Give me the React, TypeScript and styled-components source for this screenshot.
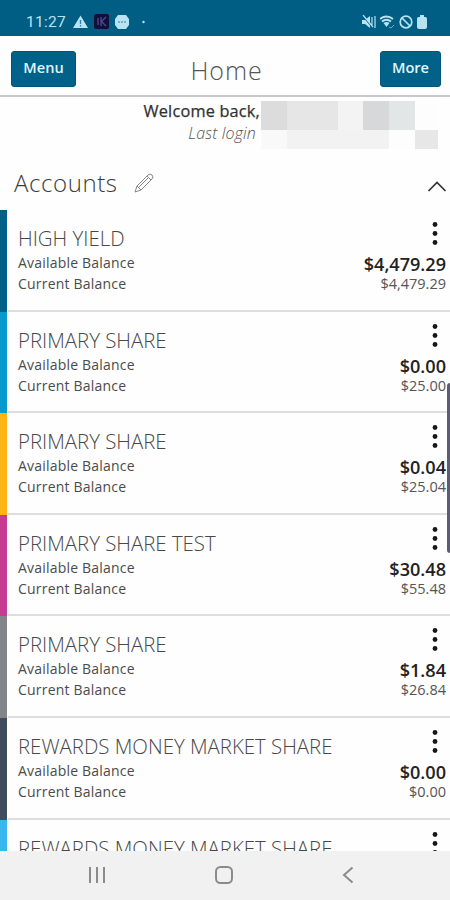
import React from "react";
import styled, { createGlobalStyle } from "styled-components";

const GlobalStyle = createGlobalStyle`
  * { box-sizing: border-box; }
  body { margin: 0; background: #fefefe; font-family: "Open Sans", "Noto Sans", sans-serif; }
`;

const Screen = styled.div`
  position: relative;
  display: flex;
  flex-direction: column;
  width: 450px;
  height: 900px;
  overflow: hidden;
  background: #fefefe;
`;

const StatusBar = styled.header`
  display: flex;
  justify-content: space-between;
  flex: none;
  height: 36px;
  padding: 7px 23px 0 26px;
  background: #005e85;
  color: #b9e3f3;
`;

const StatusGroup = styled.div<{ $gap: number }>`
  display: flex;
  align-items: center;
  gap: ${(p) => p.$gap}px;
  height: 29px;
`;

const Clock = styled.span`
  width: 41px;
  font: 400 15.5px/28px Roboto, sans-serif;
  letter-spacing: 0.25px;
  white-space: nowrap;
`;

const Toolbar = styled.div`
  display: flex;
  justify-content: space-between;
  flex: none;
  height: 61px;
  padding: 15px 9px 0 11px;
  border-bottom: 2px solid #c9c9c9;
`;

const ToolbarButton = styled.button<{ $width: number }>`
  width: ${(p) => p.$width}px;
  height: 36px;
  padding: 0 0 3px;
  border: 1px solid #00577b;
  border-radius: 3px;
  background: #006189;
  color: #e2f6fc;
  font: 600 14.6px/31px "Open Sans", sans-serif;
`;

const PageTitle = styled.h1`
  margin: 3px 3px 0 0;
  color: #555;
  font-size: 25px;
  font-weight: 300;
  line-height: 33px;
  letter-spacing: 0.9px;
`;

const Welcome = styled.section`
  display: flex;
  flex: none;
  height: 66px;
  padding-top: 4px;
`;

const Greeting = styled.div`
  width: 261px;
  padding-right: 1px;
  text-align: right;
  white-space: nowrap;
`;

const WelcomeText = styled.div`
  color: #303030;
  font-size: 16.3px;
  font-weight: 400;
  line-height: 21px;
  letter-spacing: 0.2px;
  -webkit-text-stroke: 0.25px #303030;
`;

const LastLogin = styled.div`
  padding-right: 4px;
  color: #555;
  font-size: 16px;
  font-style: italic;
  font-weight: 300;
  line-height: 22px;
  letter-spacing: 0.15px;
`;

const Redaction = styled.div`
  display: grid;
  grid-template-columns: repeat(6, 25.6px) 23px;
  grid-template-rows: 29px 19px;
`;

const RedactionCell = styled.span<{ $shade: string }>`
  background: ${(p) => p.$shade};
`;

const SectionHeader = styled.div`
  display: flex;
  align-items: center;
  flex: none;
  height: 47px;
  padding: 0 3px 8px 14px;
`;

const SectionTitle = styled.h2`
  margin: 0 16px 0 0;
  color: #3c3c3c;
  font-size: 24px;
  font-weight: 300;
  line-height: 32px;
  letter-spacing: 0.6px;
`;

const Chevron = styled.svg`
  margin: 7px 0 0 auto;
`;

const AccountList = styled.main`
  flex: 1;
  min-height: 0;
  overflow: hidden;
`;

const Account = styled.article`
  display: flex;
  height: 101.6px;
`;

const Stripe = styled.div<{ $color: string }>`
  flex: none;
  width: 7px;
  background: ${(p) => p.$color};
`;

const AccountBody = styled.div`
  display: flex;
  justify-content: space-between;
  flex: 1;
  margin-left: 1px;
  padding: 14px 4px 0 10px;
  border-bottom: 2px solid #dedede;
`;

const Details = styled.div`
  white-space: nowrap;
`;

const AccountName = styled.h3`
  margin: 0;
  color: #484848;
  font-size: 20.4px;
  font-weight: 300;
  line-height: 28px;
`;

const BalanceLabel = styled.div`
  color: #4b4b4b;
  font-size: 14px;
  line-height: 21px;
  letter-spacing: 0.2px;
`;

const Amounts = styled.div`
  display: flex;
  flex-direction: column;
  align-items: flex-end;
  color: #222;
`;

const Dots = styled.svg`
  flex: none;
  margin: -3px 6px 0 0;
`;

const Available = styled.div`
  margin-top: 7px;
  font-size: 18.1px;
  font-weight: 600;
  line-height: 20px;
`;

const Current = styled.div`
  color: #555;
  font-size: 14.5px;
  line-height: 19px;
`;

const ScrollThumb = styled.div`
  position: absolute;
  top: 383px;
  right: 0;
  width: 3px;
  height: 170px;
  border-radius: 3px 0 0 3px;
  background: #5d5c70;
`;

const NavigationBar = styled.nav`
  display: grid;
  grid-template-columns: 18px 20px 12px;
  column-gap: 108px;
  align-items: center;
  flex: none;
  height: 49px;
  padding: 0 0 1px 88px;
  background: #f1f1f1;
`;

const accounts = [
  { name: "HIGH YIELD", available: "$4,479.29", current: "$4,479.29", color: "#006184" },
  { name: "PRIMARY SHARE", available: "$0.00", current: "$25.00", color: "#0999ce" },
  { name: "PRIMARY SHARE", available: "$0.04", current: "$25.04", color: "#fdb515" },
  { name: "PRIMARY SHARE TEST", available: "$30.48", current: "$55.48", color: "#c83b92" },
  { name: "PRIMARY SHARE", available: "$1.84", current: "$26.84", color: "#818488" },
  { name: "REWARDS MONEY MARKET SHARE", available: "$0.00", current: "$0.00", color: "#3e4c5d" },
  { name: "REWARDS MONEY MARKET SHARE", available: "$0.00", current: "$0.00", color: "#39b5ef" },
];

const redactionShades = [
  "#dcdcdc", "#e6e6e6", "#e6e6e6", "#f3f3f3", "#d7d8d9", "#e3e6e6", "#fdfdfd",
  "#f9f9f9", "#f2f2f2", "#f2f2f2", "#f2f2f2", "#f2f2f2", "#fdfdfd", "#e7e7e7",
];

function StatusIcons() {
  return (
    <StatusGroup $gap={4.5}>
      <svg width="14" height="14" viewBox="0 0 14 14">
        <path d="M0 5h3l5-4v12L3 9H0z" fill="currentColor" />
        <path d="M1 1l10 12" stroke="#005e85" strokeWidth="1.3" />
        <path d="M1 0l10 12M10 2v8M13 1v12" stroke="currentColor" strokeWidth="1.2" fill="none" />
      </svg>
      <svg width="14" height="14" viewBox="0 0 14 14" fill="none" stroke="currentColor">
        <path d="M0 4Q6.5-1 13 4M2 6.5q4.5-3.5 9 0" strokeWidth="1.9" />
        <path d="M3.5 8q3-2 6 0L6.5 12z" fill="currentColor" stroke="none" />
        <path d="M9 12l2 1 3-3" strokeWidth="1" opacity=".6" />
      </svg>
      <svg width="14" height="14" viewBox="0 0 14 14" fill="none" stroke="currentColor" strokeWidth="1.7">
        <circle cx="7" cy="7" r="5.8" />
        <path d="M3 3l8 8" />
      </svg>
      <svg width="10" height="14" viewBox="0 0 10 14">
        <path d="M3 0h4v2h1.5Q10 2 10 4v8q0 2-2 2H2q-2 0-2-2V4q0-2 1.5-2H3z" fill="currentColor" />
      </svg>
    </StatusGroup>
  );
}

function NotificationIcons() {
  return (
    <StatusGroup $gap={6}>
      <Clock>11:27</Clock>
      <svg width="15" height="13" viewBox="0 0 15 13">
        <path d="M7.5 0.5L15 13H0z" fill="currentColor" />
        <path d="M7.5 5v4M7.5 10v1.5" stroke="#337b99" strokeWidth="1.3" />
      </svg>
      <svg width="15" height="15" viewBox="0 0 15 15">
        <rect width="15" height="15" rx="2" fill="#101137" />
        <path d="M4 4v7M7 3v9M12 3L7.5 7.5 12 12" stroke="#534796" strokeWidth="1.3" fill="none" />
      </svg>
      <svg width="14" height="14" viewBox="0 0 14 14">
        <path d="M3 0h8l3 4v6l-3 4H3l-3-4V4z" fill="currentColor" />
        <path d="M3 7h8" stroke="#7faec3" strokeWidth="2" strokeDasharray="2 1" />
      </svg>
      <svg width="10" height="4" viewBox="0 0 10 4">
        <circle cx="8.5" cy="2" r="1.2" fill="currentColor" />
      </svg>
    </StatusGroup>
  );
}

export default function App() {
  return (
    <>
      <GlobalStyle />
      <Screen>
        <StatusBar>
          <NotificationIcons />
          <StatusIcons />
        </StatusBar>
        <Toolbar>
          <ToolbarButton $width={65}>Menu</ToolbarButton>
          <PageTitle>Home</PageTitle>
          <ToolbarButton $width={61}>More</ToolbarButton>
        </Toolbar>
        <Welcome>
          <Greeting>
            <WelcomeText>Welcome back,</WelcomeText>
            <LastLogin>Last login</LastLogin>
          </Greeting>
          <Redaction>
            {redactionShades.map((shade, index) => (
              <RedactionCell key={index} $shade={shade} />
            ))}
          </Redaction>
        </Welcome>
        <SectionHeader>
          <SectionTitle>Accounts</SectionTitle>
          <svg width="20" height="20" viewBox="0 0 20 20" fill="none" stroke="#888" strokeWidth="1">
            <path d="M1 19l2-6L14 2q2-2 4 0t0 4L7 17zM3 13l4 4M13 3l4 4M5 14l9-9" />
          </svg>
          <Chevron width="20" height="11" viewBox="0 0 20 11">
            <path d="M1.5 10L10 1.5 18.5 10" fill="none" stroke="#333" strokeWidth="1.7" />
          </Chevron>
        </SectionHeader>
        <AccountList>
          {accounts.map((account, index) => (
            <Account key={index}>
              <Stripe $color={account.color} />
              <AccountBody>
                <Details>
                  <AccountName>{account.name}</AccountName>
                  <BalanceLabel>Available Balance</BalanceLabel>
                  <BalanceLabel>Current Balance</BalanceLabel>
                </Details>
                <Amounts>
                  <Dots width="10" height="26" viewBox="0 0 10 26" fill="#171717">
                    <circle cx="5" cy="3.5" r="2.4" />
                    <circle cx="5" cy="12.5" r="2.4" />
                    <circle cx="5" cy="21.5" r="2.4" />
                  </Dots>
                  <Available>{account.available}</Available>
                  <Current>{account.current}</Current>
                </Amounts>
              </AccountBody>
            </Account>
          ))}
        </AccountList>
        <ScrollThumb />
        <NavigationBar>
          <svg width="18" height="18" viewBox="0 0 18 18">
            <path d="M2 1v16M9 1v16M16 1v16" stroke="#8b8b8b" strokeWidth="2" />
          </svg>
          <svg width="20" height="18" viewBox="0 0 20 18">
            <rect x="2" y="1" width="16" height="16" rx="4.5" fill="none" stroke="#8b8b8b" strokeWidth="2" />
          </svg>
          <svg width="12" height="18" viewBox="0 0 12 18">
            <path d="M10.5 1.5L2 9l8.5 7.5" fill="none" stroke="#8b8b8b" strokeWidth="2" />
          </svg>
        </NavigationBar>
      </Screen>
    </>
  );
}
